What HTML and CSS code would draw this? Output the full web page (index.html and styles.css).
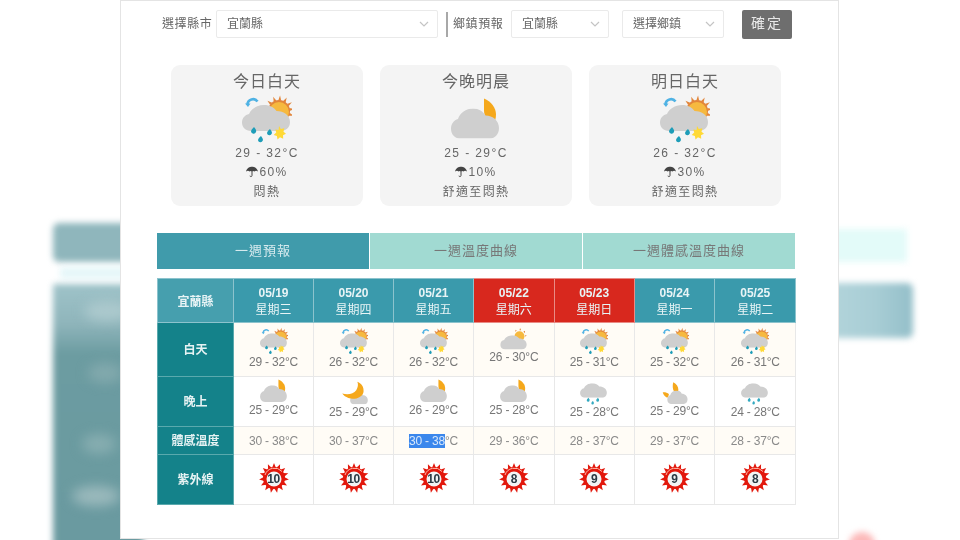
FILE: index.html
```html
<!DOCTYPE html>
<html lang="zh-Hant">
<head>
<meta charset="utf-8">
<title>一週預報</title>
<link rel="stylesheet" href="styles.css">
</head>
<body>
<svg class="defs" aria-hidden="true">
  <defs>
    <symbol id="cloud" viewBox="0 0 50 26" preserveAspectRatio="none">
      <path fill="#cfcfcf" d="M9 26C3.500 26 0 22 0 17.500C0 13 3 10 7 9C9 4 15 0 22 0C28 0 32 2.500 34.500 6C42 6 48 10.500 48 17C48 22.500 44 26 39 26Z"/>
    </symbol>
    <symbol id="rainsun" viewBox="0 0 50 50">
      <g fill="#e2853a">
        <path d="M35.500 6.500L37 1.500l1.500 5z" transform="rotate(-75 37 17)"/>
        <path d="M35.500 6.500L37 1.500l1.500 5z" transform="rotate(-48 37 17)"/>
        <path d="M35.500 6.500L37 1.500l1.500 5z" transform="rotate(-22 37 17)"/>
        <path d="M35.500 6.500L37 1.500l1.500 5z" transform="rotate(4 37 17)"/>
        <path d="M35.500 6.500L37 1.500l1.500 5z" transform="rotate(30 37 17)"/>
        <path d="M35.500 6.500L37 1.500l1.500 5z" transform="rotate(56 37 17)"/>
        <path d="M35.500 6.500L37 1.500l1.500 5z" transform="rotate(82 37 17)"/>
        <path d="M35.500 6.500L37 1.500l1.500 5z" transform="rotate(108 37 17)"/>
      </g>
      <circle cx="37" cy="17" r="11" fill="#e2853a"/>
      <circle cx="37" cy="18" r="10" fill="#f6b93f"/>
      <path d="M5.500 10.500a5.500 5.500 0 0 1 10-3" fill="none" stroke="#4fb2e4" stroke-width="2.600"/>
      <path fill="#4fb2e4" d="M3 9.500h5.500l-2.500 3.500z"/>
      <use href="#cloud" width="50" height="26" y="11"/>
      <path fill="#1e9db8" d="M12 33c2 2.500 2.500 3.500 2 5a2.600 2.600 0 0 1-5-.500c0-1.500 1.500-3 3-4.500zM28 35c1.700 2.200 2.200 3.200 1.800 4.500a2.500 2.500 0 0 1-4.800-.300c0-1.400 1.500-2.800 3-4.200zM19 42c1.700 2.200 2.200 3.200 1.800 4.500a2.500 2.500 0 0 1-4.800-.300c0-1.400 1.500-2.800 3-4.200z"/>
      <path fill="#ffd936" d="M37 32l1.800 3 3.500-.800-.800 3.500 2.500 2-3 1.500.200 3.500-3.200-1.500-2.500 2.400-.600-3.500-3.200-1 2.500-2.500-.800-3.200 3.200.600z"/>
    </symbol>
    <symbol id="cloudmoon" viewBox="0 0 50 43">
      <path fill="#f5a81c" d="M33 1c7 3 12 9 12 16 0 4-1 7-3 9-5-2-9-7-9-13 0-5 0-8 0-12z"/>
      <use href="#cloud" width="50" height="30" y="11"/>
    </symbol>
    <symbol id="cloudsun" viewBox="0 4 50 40">
      <circle cx="35" cy="19" r="9" fill="#f6b93f"/>
      <path fill="#e2853a" d="M27 11l1-4 2 2zM35 8l1-4 2 4zM42 11l3-2 0 4zM45 17l3 0-2 3z"/>
      <use href="#cloud" width="50" height="26" y="17"/>
    </symbol>
    <symbol id="moon" viewBox="0 0 50 42">
      <use href="#cloud" width="33" height="21" x="18" y="20"/>
      <path fill="#f5a81c" d="M31 1c8 3 12 10 11 18-2 10-16 15-27 11-5-2-8-4-11-8 10 3 20 1 25-6 3-5 4-10 2-15z"/>
    </symbol>
    <symbol id="raincloud" viewBox="0 0 50 43">
      <use href="#cloud" width="50" height="26" y="4"/>
      <path fill="#33a9c0" d="M15 30c2 2.500 2.500 3.500 2 5a2.500 2.500 0 0 1-5-.500c0-1.500 1.500-3 3-4.500zM32 30c2 2.500 2.500 3.500 2 5a2.500 2.500 0 0 1-5-.500c0-1.500 1.500-3 3-4.500zM23 36c1.500 2 2 3 1.700 4.200a2.200 2.200 0 0 1-4.400-.300c0-1.200 1.300-2.600 2.700-3.900z"/>
    </symbol>
    <symbol id="moonpair" viewBox="0 0 50 43">
      <path fill="#f5a81c" d="M22 4c6 3 9 8 9 13 0 3-1 5-2 7-5-1-8-6-8-11 0-4 0-6 1-9zM3 22c3-.500 8 0 11 3 0 2-1 5-3 7-4-2-7-6-8-10z"/>
      <use href="#cloud" width="38" height="24" x="11" y="19"/>
    </symbol>
    <symbol id="uvsun" viewBox="0 0 30 30">
      <g fill="#e2180c">
        <path id="ray" d="M13 5L15 0l2 5z"/>
        <use href="#ray" transform="rotate(24 15 15)"/>
        <use href="#ray" transform="rotate(48 15 15)"/>
        <use href="#ray" transform="rotate(72 15 15)"/>
        <use href="#ray" transform="rotate(96 15 15)"/>
        <use href="#ray" transform="rotate(120 15 15)"/>
        <use href="#ray" transform="rotate(144 15 15)"/>
        <use href="#ray" transform="rotate(168 15 15)"/>
        <use href="#ray" transform="rotate(192 15 15)"/>
        <use href="#ray" transform="rotate(216 15 15)"/>
        <use href="#ray" transform="rotate(240 15 15)"/>
        <use href="#ray" transform="rotate(264 15 15)"/>
        <use href="#ray" transform="rotate(288 15 15)"/>
        <use href="#ray" transform="rotate(312 15 15)"/>
        <use href="#ray" transform="rotate(336 15 15)"/>
      </g>
      <circle cx="15" cy="15" r="11" fill="#e2180c"/>
      <path d="M6 12a10 10 0 0 1 17-3.500" fill="none" stroke="#ffb9a8" stroke-width="1"/>
      <circle cx="15" cy="16" r="7.500" fill="#f2f4f4"/>
    </symbol>
    <symbol id="umbrella" viewBox="0 0 12 12">
      <path fill="#444" d="M0 5.500C1 2 3.500.8 6 .8S11 2 12 5.500C10.500 4.600 9.500 4.600 8.500 5.500 7.800 4.800 6.600 4.600 6 5.500 5.400 4.600 4.200 4.800 3.500 5.500 2.500 4.600 1.500 4.600 0 5.500z"/>
      <path d="M6 5v4.500c0 1.500-2 1.500-2 .2" fill="none" stroke="#444" stroke-width="1"/>
    </symbol>
    <symbol id="chevron" viewBox="0 0 10 6">
      <path d="M1 1l4 4 4-4" fill="none" stroke="#c4c4c4" stroke-width="1.200"/>
    </symbol>
  </defs>
</svg>

<div class="stage">
  <div class="backdrop" aria-hidden="true">
    <div class="blur blur-left-tab"></div>
    <div class="blur blur-left-gap"></div>
    <div class="blur blur-left-body"></div>
    <div class="blur blur-spot spot-a"></div>
    <div class="blur blur-spot spot-b"></div>
    <div class="blur blur-spot spot-c"></div>
    <div class="blur blur-spot spot-d"></div>
    <div class="blur blur-right-tab"></div>
    <div class="blur blur-right-head"></div>
    <div class="blur blur-red"></div>
  </div>

  <main class="panel">
    <form class="toolbar">
      <span class="label">選擇縣市</span>
      <div class="select select-county"><span>宜蘭縣</span><svg class="chev"><use href="#chevron"/></svg></div>
      <span class="divider"></span>
      <span class="label label-town">鄉鎮預報</span>
      <div class="select select-small"><span>宜蘭縣</span><svg class="chev"><use href="#chevron"/></svg></div>
      <div class="select select-town"><span>選擇鄉鎮</span><svg class="chev"><use href="#chevron"/></svg></div>
      <button class="confirm" type="button">確定</button>
    </form>

    <section class="cards">
      <article class="card">
        <h2>今日白天</h2>
        <svg class="card-icon"><use href="#rainsun"/></svg>
        <p class="card-temp">29 - 32°C</p>
        <p class="card-rain"><svg class="umbrella"><use href="#umbrella"/></svg>60%</p>
        <p class="card-feel">悶熱</p>
      </article>
      <article class="card">
        <h2>今晚明晨</h2>
        <svg class="card-icon"><use href="#cloudmoon"/></svg>
        <p class="card-temp">25 - 29°C</p>
        <p class="card-rain"><svg class="umbrella"><use href="#umbrella"/></svg>10%</p>
        <p class="card-feel">舒適至悶熱</p>
      </article>
      <article class="card">
        <h2>明日白天</h2>
        <svg class="card-icon"><use href="#rainsun"/></svg>
        <p class="card-temp">26 - 32°C</p>
        <p class="card-rain"><svg class="umbrella"><use href="#umbrella"/></svg>30%</p>
        <p class="card-feel">舒適至悶熱</p>
      </article>
    </section>

    <nav class="tabs">
      <a class="tab tab-active">一週預報</a>
      <a class="tab">一週溫度曲線</a>
      <a class="tab">一週體感溫度曲線</a>
    </nav>

    <table class="week">
      <colgroup>
        <col class="col-label"><col class="col-a"><col class="col-a"><col class="col-a"><col class="col-b"><col class="col-a"><col class="col-b"><col class="col-b">
      </colgroup>
      <thead>
        <tr>
          <th class="corner">宜蘭縣</th>
          <th><b>05/19</b><span>星期三</span></th>
          <th><b>05/20</b><span>星期四</span></th>
          <th><b>05/21</b><span>星期五</span></th>
          <th class="weekend"><b>05/22</b><span>星期六</span></th>
          <th class="weekend"><b>05/23</b><span>星期日</span></th>
          <th><b>05/24</b><span>星期一</span></th>
          <th><b>05/25</b><span>星期二</span></th>
        </tr>
      </thead>
      <tbody>
        <tr class="row-day tint">
          <th>白天</th>
          <td><svg class="ico"><use href="#rainsun"/></svg>29 - 32°C</td>
          <td><svg class="ico"><use href="#rainsun"/></svg>26 - 32°C</td>
          <td><svg class="ico"><use href="#rainsun"/></svg>26 - 32°C</td>
          <td><svg class="ico ico-short"><use href="#cloudsun"/></svg>26 - 30°C</td>
          <td><svg class="ico"><use href="#rainsun"/></svg>25 - 31°C</td>
          <td><svg class="ico"><use href="#rainsun"/></svg>25 - 32°C</td>
          <td><svg class="ico"><use href="#rainsun"/></svg>26 - 31°C</td>
        </tr>
        <tr class="row-night">
          <th>晚上</th>
          <td><svg class="ico ico-night"><use href="#cloudmoon"/></svg>25 - 29°C</td>
          <td><svg class="ico ico-night ico-low"><use href="#moon"/></svg>25 - 29°C</td>
          <td><svg class="ico ico-night"><use href="#cloudmoon"/></svg>26 - 29°C</td>
          <td><svg class="ico ico-night"><use href="#cloudmoon"/></svg>25 - 28°C</td>
          <td><svg class="ico ico-night ico-low"><use href="#raincloud"/></svg>25 - 28°C</td>
          <td><svg class="ico ico-night ico-mid"><use href="#moonpair"/></svg>25 - 29°C</td>
          <td><svg class="ico ico-night ico-low"><use href="#raincloud"/></svg>24 - 28°C</td>
        </tr>
        <tr class="row-feel tint">
          <th>體感溫度</th>
          <td>30 - 38°C</td>
          <td>30 - 37°C</td>
          <td><mark>30 - 38</mark>°C</td>
          <td>29 - 36°C</td>
          <td>28 - 37°C</td>
          <td>29 - 37°C</td>
          <td>28 - 37°C</td>
        </tr>
        <tr class="row-uv">
          <th>紫外線</th>
          <td><span class="uv"><svg class="uv-sun"><use href="#uvsun"/></svg><i>10</i></span></td>
          <td><span class="uv"><svg class="uv-sun"><use href="#uvsun"/></svg><i>10</i></span></td>
          <td><span class="uv"><svg class="uv-sun"><use href="#uvsun"/></svg><i>10</i></span></td>
          <td><span class="uv"><svg class="uv-sun"><use href="#uvsun"/></svg><i>8</i></span></td>
          <td><span class="uv"><svg class="uv-sun"><use href="#uvsun"/></svg><i>9</i></span></td>
          <td><span class="uv"><svg class="uv-sun"><use href="#uvsun"/></svg><i>9</i></span></td>
          <td><span class="uv"><svg class="uv-sun"><use href="#uvsun"/></svg><i>8</i></span></td>
        </tr>
      </tbody>
    </table>
  </main>
</div>
</body>
</html>
```

FILE: styles.css
```css
* { box-sizing: border-box; }

html, body {
  margin: 0;
  padding: 0;
  background: #fff;
}

body {
  width: 960px;
  height: 540px;
  overflow: hidden;
  font-family: "Noto Sans CJK TC", "Liberation Sans", sans-serif;
  color: #666;
}

.defs {
  position: absolute;
  width: 0;
  height: 0;
}

.stage {
  position: relative;
  width: 960px;
  height: 540px;
  overflow: hidden;
  padding-left: 120px;
}

/* blurred video-style backdrop showing at both sides of the panel */
.backdrop {
  position: absolute;
  inset: 0;
}

.blur {
  position: absolute;
  filter: blur(3px);
}

.blur-left-tab {
  left: 53px;
  top: 223px;
  width: 90px;
  height: 39px;
  border-radius: 6px;
  background: #8fb6bc;
}

.blur-left-gap {
  left: 60px;
  top: 267px;
  width: 80px;
  height: 12px;
  background: #e6f7f9;
}

.blur-left-body {
  left: 53px;
  top: 284px;
  width: 90px;
  height: 280px;
  background: linear-gradient(#9fc3c9 0, #8fb5bb 40px, #6c9ca1 70px, #6a9aa0 100%);
}

.blur-spot {
  width: 34px;
  height: 20px;
  border-radius: 50%;
  filter: blur(6px);
}

.spot-a { left: 84px; top: 301px; width: 46px; background: #acc9cd; }
.spot-b { left: 88px; top: 363px; background: #82a9ad; }
.spot-c { left: 82px; top: 434px; background: #86adb0; }
.spot-d { left: 72px; top: 486px; width: 48px; background: #9ab9bc; }

.blur-right-tab {
  left: 820px;
  top: 229px;
  width: 87px;
  height: 33px;
  background: #e3fbf9;
}

.blur-right-head {
  left: 820px;
  top: 283px;
  width: 93px;
  height: 55px;
  border-radius: 6px;
  background: linear-gradient(90deg, #b5d6dc, #a8cdd5 60%, #94bfc9);
}

.blur-red {
  left: 849px;
  top: 532px;
  width: 26px;
  height: 26px;
  border-radius: 50%;
  background: #fcb9b9;
}

.panel {
  position: relative;
  width: 719px;
  height: 539px;
  background: #fff;
  border: 1px solid #e4e4e4;
  filter: blur(0.35px);
}

/* toolbar */
.toolbar {
  display: flex;
  align-items: center;
  height: 28px;
  margin-top: 9px;
  padding-left: 41px;
}

.label {
  width: 54px;
  padding-bottom: 3px;
  font-size: 12px;
  letter-spacing: 0.6px;
  color: #666;
  white-space: nowrap;
}

.label-town {
  width: 58px;
  margin-left: 5px;
}

.select {
  display: flex;
  align-items: center;
  justify-content: space-between;
  height: 28px;
  padding: 0 8px 0 10px;
  border: 1px solid #eaeaea;
  border-radius: 2px;
  background: #fff;
  font-size: 12px;
  color: #666;
}

.select span { padding-bottom: 3px; }

.select-county { width: 222px; }
.select-small { width: 98px; margin-right: 13px; }
.select-town { width: 102px; }

.chev {
  width: 10px;
  height: 6px;
}

.divider {
  width: 2px;
  height: 25px;
  margin-left: 8px;
  background: #a8a8a8;
}

.confirm {
  width: 50px;
  height: 29px;
  margin-left: 18px;
  border: 0;
  border-radius: 2px;
  background: #6e6e6e;
  color: #e8e8e8;
  font: 14px "Noto Sans CJK TC", sans-serif;
  letter-spacing: 2px;
  padding: 0 0 4px;
}

/* summary cards */
.cards {
  display: flex;
  gap: 17px;
  margin-top: 27px;
  padding-left: 50px;
}

.card {
  display: flex;
  flex-direction: column;
  align-items: center;
  width: 192px;
  height: 141px;
  padding-top: 4px;
  border-radius: 9px;
  background: #f4f4f4;
}

.card h2 {
  margin: 0;
  height: 22px;
  font-size: 16px;
  line-height: 22px;
  font-weight: 400;
  letter-spacing: 1px;
  color: #666;
}

.card-icon {
  width: 50px;
  height: 50px;
  margin-top: 3px;
}

.card p {
  display: flex;
  align-items: center;
  height: 18px;
  margin: 0;
  color: #666;
  font-size: 12px;
  letter-spacing: 1.4px;
  line-height: 18px;
}

.card-temp,
.card-rain {
  font-family: "Liberation Sans", sans-serif;
}

.card p.card-rain { margin-top: 1px; }
.card p.card-feel { margin-top: 1px; }

.umbrella {
  width: 12px;
  height: 12px;
  margin-right: 1px;
}

/* tabs */
.tabs {
  display: flex;
  gap: 1px;
  width: 638px;
  margin: 27px 0 0 36px;
}

.tab {
  flex: 1;
  height: 36px;
  font-size: 13px;
  line-height: 34px;
  letter-spacing: 1px;
  text-align: center;
  background: #a1dad2;
  color: #777;
}

.tab-active {
  background: #409bab;
  color: #d6eaee;
}

/* weekly table */
.week {
  width: 638px;
  height: 226px;
  margin: 9px 0 0 36px;
  border-collapse: collapse;
  table-layout: fixed;
  font-family: "Liberation Sans", sans-serif;
  font-size: 12px;
  line-height: 14px;
  letter-spacing: -0.2px;
  color: #777;
}

.col-label { width: 76px; }
.col-a { width: 80px; }
.col-b { width: 80.700px; }

.week th,
.week td {
  padding: 0;
  border: 1px solid #e8e8e8;
  text-align: center;
  vertical-align: middle;
}

.week thead tr { height: 44px; }

.week thead th {
  border-color: #8cc3cd;
  background: #3a9aac;
  color: #e8f4f6;
  font-weight: 400;
  font-size: 12px;
  line-height: 17px;
  letter-spacing: 0;
}

.week thead th b {
  display: block;
  font-weight: 700;
  font-family: "Liberation Sans", sans-serif;
}

.week thead th span {
  display: block;
  margin-top: -2px;
  font-family: "Noto Sans CJK TC", sans-serif;
}

.week thead .corner {
  background: #469fae;
  font-family: "Noto Sans CJK TC", sans-serif;
  font-weight: 700;
}

.week thead .weekend {
  background: #d8281e;
  border-color: #e98b85;
}

.week tbody th {
  padding-bottom: 2px;
  border-color: #5aa9ad;
  background: #14828a;
  color: #e6f2f3;
  font-family: "Noto Sans CJK TC", sans-serif;
  font-size: 12px;
  font-weight: 700;
  letter-spacing: 0;
}

.tint td { background: #fffcf6; }

.row-day { height: 54px; }
.row-night { height: 50px; }
.row-feel { height: 28px; }
.row-uv { height: 50px; }

.row-day td,
.row-night td { vertical-align: top; }

.row-day td { padding-top: 4px; }
.row-night td { padding-top: 2px; }

.row-feel td { color: #8a8a8a; }

.ico {
  display: block;
  width: 28px;
  height: 28px;
  margin: 0 auto;
}

.ico-short {
  height: 22px;
  margin-top: 1px;
}

.ico-night {
  height: 24px;
}

.ico-low {
  margin-top: 2px;
}

.ico-mid {
  margin-top: 1px;
}

mark {
  background: #3b87ec;
  color: #d8e8fb;
}

.uv {
  position: relative;
  display: block;
  width: 30px;
  height: 30px;
  margin: -4px auto 0;
}

.uv-sun {
  display: block;
  width: 30px;
  height: 30px;
}

.uv i {
  position: absolute;
  left: 0;
  right: 0;
  top: 9px;
  font-style: normal;
  font-weight: 700;
  font-size: 12px;
  line-height: 14px;
  letter-spacing: -0.3px;
  color: #2a3a44;
}
```
